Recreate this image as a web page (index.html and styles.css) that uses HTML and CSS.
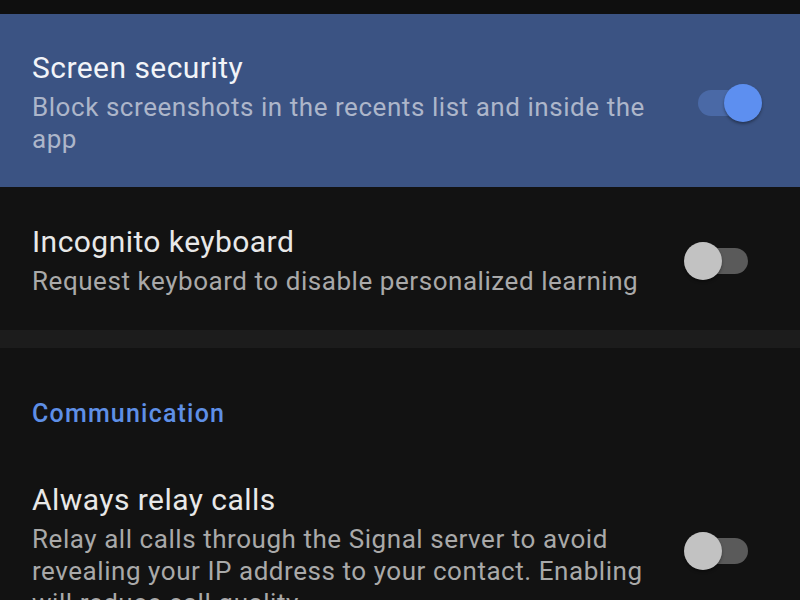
FILE: index.html
```html
<!DOCTYPE html>
<html lang="en">
<head>
<meta charset="utf-8">
<title>Privacy settings</title>
<link rel="stylesheet" href="styles.css">
</head>
<body>
<div class="screen">
  <div class="topbar"></div>
  <div class="pref pref-active pref-first">
    <div class="pref-text">
      <div class="pref-title">Screen security</div>
      <div class="pref-summary">Block screenshots in the recents list and inside the app</div>
    </div>
    <div class="switch switch-on"><span class="track"></span><span class="thumb"></span></div>
  </div>
  <div class="pref pref-second">
    <div class="pref-text">
      <div class="pref-title">Incognito keyboard</div>
      <div class="pref-summary">Request keyboard to disable personalized learning</div>
    </div>
    <div class="switch"><span class="track"></span><span class="thumb"></span></div>
  </div>
  <div class="divider"></div>
  <div class="category">Communication</div>
  <div class="pref pref-third">
    <div class="pref-text">
      <div class="pref-title">Always relay calls</div>
      <div class="pref-summary">Relay all calls through the Signal server to avoid revealing your IP address to your contact. Enabling will reduce call quality.</div>
    </div>
    <div class="switch"><span class="track"></span><span class="thumb"></span></div>
  </div>
</div>
</body>
</html>
```

FILE: styles.css
```css
html, body {
  margin: 0;
  padding: 0;
  background: #121212;
  overflow: hidden;
}
.screen {
  width: 800px;
  height: 600px;
  overflow: hidden;
  font-family: Roboto, "Noto Sans", sans-serif;
  background: #121212;
}
.topbar {
  height: 14px;
  background: #0f0f0f;
}
.pref {
  display: flex;
  align-items: center;
  padding: 36px 38px 32px 32px;
  gap: 24px;
}
.pref-active {
  background: #3b5383;
}
.pref-first {
  height: 173px;
  box-sizing: border-box;
}
.pref-second {
  height: 143px;
  box-sizing: border-box;
}
.pref-text {
  flex: 1;
  min-width: 0;
}
.pref-title {
  font-size: 30px;
  line-height: 36px;
  letter-spacing: 0.45px;
  color: #e8e8e8;
}
.pref-active .pref-title {
  color: #f2f4f8;
}
.pref-summary {
  margin-top: 5px;
  font-size: 26px;
  line-height: 32px;
  letter-spacing: 0.55px;
  color: #a9a9a9;
}
.pref-active .pref-summary {
  color: #adb6ca;
}
.switch {
  position: relative;
  width: 78px;
  height: 38px;
  flex: none;
}
.track {
  position: absolute;
  left: 14px;
  top: 6px;
  width: 50px;
  height: 26px;
  border-radius: 13px;
  background: #5a5a5a;
}
.thumb {
  position: absolute;
  left: 0;
  top: 0;
  width: 38px;
  height: 38px;
  border-radius: 50%;
  background: #c2c2c2;
  box-shadow: 0 2px 3px rgba(0, 0, 0, 0.35);
}
.switch-on .track {
  background: #4a69a6;
}
.switch-on .thumb {
  left: 40px;
  background: #5d8ff0;
}
.divider {
  height: 18px;
  background: #1c1c1c;
}
.category {
  padding: 50px 32px 16px;
  font-size: 25px;
  line-height: 32px;
  font-weight: 500;
  letter-spacing: 1.2px;
  color: #5e8fe6;
}
```
